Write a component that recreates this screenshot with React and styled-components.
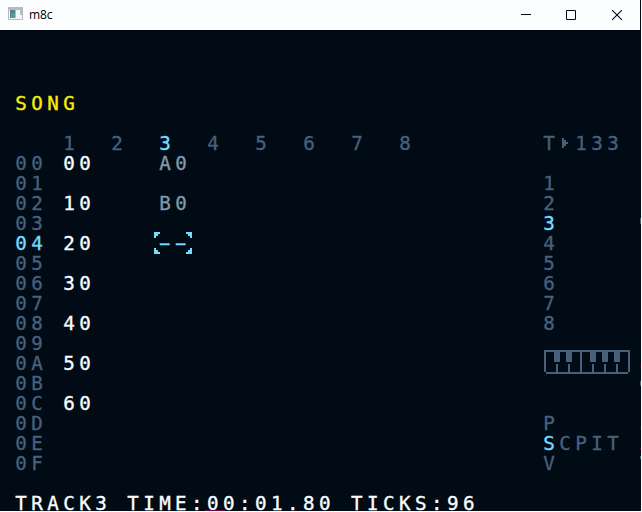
import React from "react";
import styled, { createGlobalStyle } from "styled-components";

const color = {
  bg: "#000b16",
  dim: "#48607a",
  cursor: "#75dcfd",
  value: "#fbfdfe",
  muted: "#8298a9",
  title: "#fde909",
};

const GlobalStyle = createGlobalStyle`
  * { box-sizing: border-box; }
  body { margin: 0; background: #fff; overflow: hidden; }
`;

const Window = styled.div`
  position: relative;
  display: flex;
  flex-direction: column;
  width: 641px;
  height: 511px;
  overflow: hidden;
  background: ${color.bg};
`;

const TitleBar = styled.header`
  display: flex;
  align-items: center;
  flex: none;
  width: 640px;
  height: 30px;
  padding-left: 8px;
  background: #fbfdfe;
`;

const AppIcon = styled.svg`
  display: block;
  width: 15px;
  height: 13px;
  margin-top: -3px;
`;

const Caption = styled.span`
  flex: 1;
  margin: -1px 0 0 6px;
  font: 12px/16px "Open Sans", sans-serif;
  letter-spacing: -0.15px;
  color: #000;
`;

const CaptionButton = styled.button`
  display: grid;
  place-items: center;
  width: 46px;
  height: 28px;
  padding: 0;
  border: 0;
  background: none;
  color: #000b16;
  svg { display: block; }
`;

const MinimizeButton = styled(CaptionButton)`
  margin-right: -1px;
  padding-right: 0;
`;

const Screen = styled.main`
  display: flex;
  flex-direction: column;
  flex: none;
  width: 641px;
  height: 481px;
  padding: 64px 0 0 16px;
  font: 19.2px/20px "DejaVu Sans Mono", monospace;
  letter-spacing: 4.44px;
  white-space: pre;
  color: ${color.dim};
  -webkit-text-stroke: 0.35px currentColor;
`;

const Line = styled.div`
  height: 20px;
  margin-left: -0.8px;
  color: ${(p) => color[p.$tone || "dim"]};
`;

const Workspace = styled.div`
  display: flex;
  flex: none;
  height: 340px;
  margin: 20px 0;
`;

const SongGrid = styled.section`
  display: grid;
  grid-template-columns: repeat(9, 48px);
  grid-auto-rows: 20px;
  width: 528px;
  align-content: start;
`;

const Sidebar = styled.aside`
  display: flex;
  flex-direction: column;
  width: 96px;
`;

const TempoRow = styled.div`
  display: grid;
  grid-template-columns: 16px 16px 48px;
  height: 20px;
  margin-bottom: 20px;
`;

const Arrow = styled.svg`
  display: block;
  width: 6px;
  height: 10px;
  margin: 4px 0 0 2px;
`;

const Piano = styled.svg`
  display: block;
  flex: none;
  width: 86px;
  height: 24px;
  margin: 16px 0 40px;
`;

const MapText = styled.span`
  color: ${(p) => color[p.$tone || "dim"]};
`;

const Selection = styled.div`
  position: relative;
  height: 20px;
  color: ${color.cursor};
`;

const Brackets = styled.svg`
  position: absolute;
  left: -6px;
  top: -2px;
  width: 38px;
  height: 22px;
`;

const Dashes = styled.span`
  display: block;
  width: 32px;
  margin-left: -5.7px;
  transform: scaleX(1.85);
  transform-origin: left;
  letter-spacing: -2.91px;
`;

const EdgeMark = styled.i`
  position: absolute;
  left: ${(p) => p.$x}px;
  top: ${(p) => p.$y}px;
  width: ${(p) => p.$w || 1}px;
  height: ${(p) => p.$h || 1}px;
  background: ${(p) => p.$fill};
`;

const rows = "0123456789ABCDEF".split("").map((n) => "0" + n);
const tracks = [1, 2, 3, 4, 5, 6, 7, 8];
const song = {
  "00": { 1: "00", 3: "A0" },
  "02": { 1: "10", 3: "B0" },
  "04": { 1: "20", 3: "--" },
  "06": { 1: "30" },
  "08": { 1: "40" },
  "0A": { 1: "50" },
  "0C": { 1: "60" },
};

function SongCell({ value, track }) {
  if (value === "--") {
    return (
      <Selection>
        <Dashes>--</Dashes>
        <Brackets viewBox="0 0 38 22" fill="currentColor" shapeRendering="crispEdges">
          <path d="M0 0h6v2H4v2H2v2H0zM38 0h-6v2h2v2h2v2h2zM0 22h6v-2H4v-2H2v-2H0zM38 22h-6v-2h2v-2h2v-2h2z" />
        </Brackets>
      </Selection>
    );
  }
  return <Line $tone={track === 1 ? "value" : "muted"}>{value}</Line>;
}

function SongRow({ id }) {
  return (
    <>
      <Line $tone={id === "04" ? "cursor" : "dim"}>{id}</Line>
      {tracks.map((t) => (
        <SongCell key={t} track={t} value={song[id]?.[t]} />
      ))}
    </>
  );
}

export default function App() {
  return (
    <>
      <GlobalStyle />
      <Window>
        <TitleBar>
          <AppIcon viewBox="0 0 15 13" shapeRendering="crispEdges">
            <path fill="#b3bac3" d="M0 0h15v13H0z" />
            <path fill="#f4f6f8" d="M1 3h13v9H1z" />
            <path fill="#587f9b" d="M2 3h5v8H2z" />
            <path fill="#55a080" d="M3 6h4v5H3z" />
            <path fill="#b3bac3" d="M7 3h1v8H7zM12 3h2v5h-2z" />
          </AppIcon>
          <Caption>m8c</Caption>
          <MinimizeButton aria-label="Minimize">
            <svg width="10" height="10" shapeRendering="crispEdges">
              <path d="M0 4h10v1H0z" fill="currentColor" />
            </svg>
          </MinimizeButton>
          <CaptionButton aria-label="Maximize">
            <svg width="10" height="10" fill="none" stroke="currentColor">
              <path d="M.5 .5h9v9h-9z" />
            </svg>
          </CaptionButton>
          <CaptionButton aria-label="Close">
            <svg width="10" height="10" fill="none" stroke="currentColor" strokeWidth="1.1">
              <path d="M0 0l10 10M10 0L0 10" />
            </svg>
          </CaptionButton>
        </TitleBar>
        <Screen>
          <Line $tone="title">SONG</Line>
          <Workspace>
            <SongGrid>
              <Line />
              {tracks.map((t) => (
                <Line key={t} $tone={t === 3 ? "cursor" : "dim"}>{t}</Line>
              ))}
              {rows.map((id) => (
                <SongRow key={id} id={id} />
              ))}
            </SongGrid>
            <Sidebar>
              <TempoRow>
                <Line>T</Line>
                <Arrow viewBox="0 0 6 10" fill="currentColor" shapeRendering="crispEdges">
                  <path d="M0 0h2v10H0zM2 2h2v6H2zM4 4h2v2H4z" />
                </Arrow>
                <Line>133</Line>
              </TempoRow>
              {tracks.map((t) => (
                <Line key={t} $tone={t === 3 ? "cursor" : "dim"}>{t}</Line>
              ))}
              <Piano viewBox="0 0 86 24" fill="currentColor" shapeRendering="crispEdges">
                <path d="M0 0h86v22h-2V2H38v20h-2V2H2v20H0zM2 22h82v2H2z" />
                <path d="M10 2h6v10h-6zM22 2h6v10h-6zM46 2h6v10h-6zM58 2h6v10h-6zM70 2h6v10h-6z" />
                <path d="M12 14h2v8h-2zM24 14h2v8h-2zM48 14h2v8h-2zM60 14h2v8h-2zM72 14h2v8h-2z" />
              </Piano>
              <Line>P</Line>
              <Line><MapText $tone="cursor">S</MapText>CPIT</Line>
              <Line>V</Line>
            </Sidebar>
          </Workspace>
          <Line $tone="value">TRACK3 TIME:00:01.80 TICKS:96</Line>
        </Screen>
        <EdgeMark $x={640} $y={218} $h={6} $fill="#48607a" />
        <EdgeMark $x={640} $y={366} $fill="#6b0d45" />
        <EdgeMark $x={640} $y={381} $h={5} $fill="#48607a" />
        <EdgeMark $x={640} $y={427} $fill="#6b0d45" />
        <EdgeMark $x={640} $y={448} $fill="#6b0d45" />
        <EdgeMark $x={640} $y={456} $h={3} $fill="#48607a" />
        <EdgeMark $x={205} $y={510} $w={20} $fill="#6b0d45" />
      </Window>
    </>
  );
}
